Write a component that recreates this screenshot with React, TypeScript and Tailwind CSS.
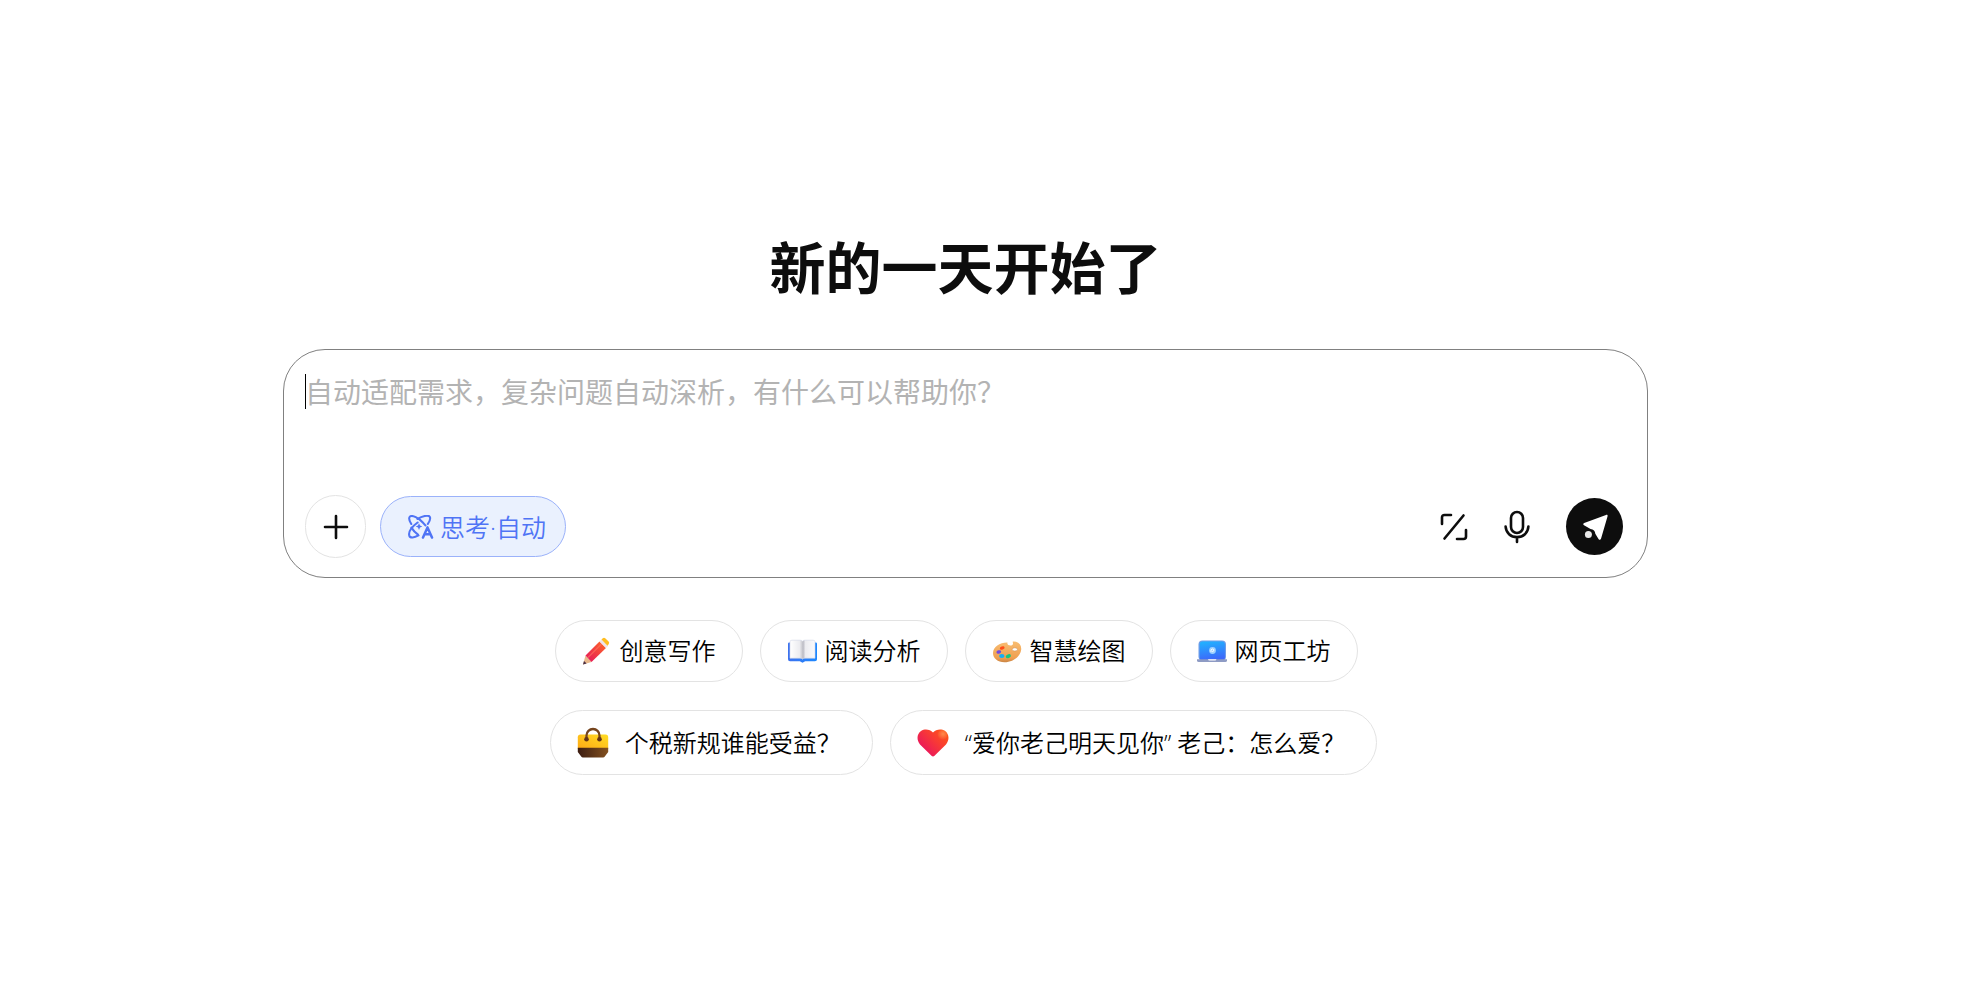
import type { ReactNode } from "react";

const sans =
  'font-["Open_Sans","Noto_Sans_CJK_SC",sans-serif]';

function PlusIcon() {
  return (
    <svg width="26" height="26" viewBox="0 0 26 26" fill="none" stroke="#0d0d0d" strokeWidth="2.6" strokeLinecap="round" aria-hidden="true">
      <path d="M13 2v22M2 13h22" />
    </svg>
  );
}

function ThinkIcon() {
  return (
    <svg width="26" height="24" viewBox="0 0 26 24" fill="none" stroke="#4f74f5" strokeWidth="2.1" strokeLinecap="round" strokeLinejoin="round" aria-hidden="true">
      <path d="M3.300 9C1.200 5.500 .6 2.600 2 1.500c2.500-1.800 8.600 1.600 12.800 5.900 1 1 1.900 2.100 2.600 3" />
      <path d="M9.500 4C14.200 1.100 20 -.2 21.600 1.600c1.200 1.500.3 4.300-1.800 7.400" />
      <path d="M9.600 7.500C4.500 11.300.3 16.700 1.300 20.600c.8 2.800 5 2.200 9.200-.2" />
      <path d="M3.400 12.600c1.700 2.700 4 5.100 6.600 7" />
      <path d="m11 8.300 1 2.300 2.300 1-2.300 1-1 2.300-1-2.300-2.300-1 2.300-1z" fill="#4f74f5" stroke="none" />
      <path d="m15 22.600 4.500-10.200L24 22.600M16.800 19.300h5.400" strokeWidth="2.500" />
    </svg>
  );
}

function ExpandIcon() {
  return (
    <svg width="28" height="28" viewBox="0 0 28 28" fill="none" stroke="#0d0d0d" strokeWidth="2.600" strokeLinecap="round" strokeLinejoin="round" aria-hidden="true">
      <path d="M2 11V4.500Q2 2 4.500 2H11M26 17v6.500q0 2.500-2.500 2.500H17M23.500 2.500 4.500 25.500" />
    </svg>
  );
}

function MicIcon() {
  return (
    <svg width="26" height="34" viewBox="0 0 26 34" fill="none" stroke="#0d0d0d" strokeWidth="2.600" strokeLinecap="round" aria-hidden="true">
      <rect x="7" y="2" width="12" height="21" rx="6" />
      <path d="M1.600 16.500c.4 6.400 5.100 10.600 11.400 10.600s11-4.200 11.400-10.600M13 27.500V32" />
    </svg>
  );
}

function SendIcon() {
  return (
    <svg width="57" height="57" viewBox="0 0 57 57" fill="#fff" aria-hidden="true">
      <path d="M41.500 18.500c.5-1.300-.3-2-1.500-1.600L18.200 25c-1.200.5-1.200 1.500-.2 2.200l6.500 3.800c3 .2 4.800 2.200 4.800 4.800l3.200 5.200c.8 1.200 2 1.100 2.500-.2z" />
      <circle cx="22.400" cy="36.500" r="3.500" fill="#e8e8e8" />
    </svg>
  );
}

function PencilIcon() {
  return (
    <svg width="30" height="30" viewBox="0 0 30 30" aria-hidden="true">
      <defs>
        <linearGradient id="pencil-body" x1="0" y1="1" x2="1" y2="0">
          <stop offset="0" stopColor="#e4145e" />
          <stop offset="1" stopColor="#ff6a25" />
        </linearGradient>
      </defs>
      <path d="M1 28.500 3.500 19.500 9.500 26z" fill="#e9b98c" />
      <path d="M1 28.500 2 25l2.600 2.500z" fill="#4a3045" />
      <path d="M3.500 19.500 17.500 5.500 24 12 9.500 26z" fill="url(#pencil-body)" />
      <path d="M6 21.500 19.500 8" stroke="#ff7560" strokeWidth="1.500" opacity=".6" />
      <path d="m17.500 5.500 2-2L26 10l-2 2z" fill="#efe3ea" />
      <path d="m19.500 3.500 1.300-1.300q1.200-1.100 2.400 0l3.400 3.300q1.200 1.200 0 2.700L25.500 9.700z" fill="#ffbd20" />
    </svg>
  );
}

function BookIcon() {
  return (
    <svg width="30" height="30" viewBox="0 0 30 30" aria-hidden="true">
      <defs>
        <linearGradient id="book-page" x1="0" x2="1">
          <stop offset="0" stopColor="#fff" />
          <stop offset=".38" stopColor="#ececf0" />
          <stop offset=".49" stopColor="#c9c9cf" />
          <stop offset=".52" stopColor="#b9b9c2" />
          <stop offset=".62" stopColor="#ececf0" />
          <stop offset="1" stopColor="#fafafc" />
        </linearGradient>
        <linearGradient id="book-cover" x1="0" x2="1">
          <stop offset="0" stopColor="#3d72ef" />
          <stop offset="1" stopColor="#1c88ff" />
        </linearGradient>
      </defs>
      <path d="M2.200 6.500h26.600q1.200 0 1.200 1.300v15.500q0 2-2 2h-9.800l-2.700 1.400-2.700-1.400H3q-2 0-2-2V7.800q0-1.300 1.200-1.300z" fill="url(#book-cover)" />
      <path d="M3 5.800q0-1.600 2-1.600h8q1.700 0 2.500 1 .8-1 2.500-1h8q2 0 2 1.600v16.400H18q-1.700 0-2.500 1-.8-1-2.500-1H3z" fill="url(#book-page)" stroke="#d0d5e6" strokeWidth=".6" />
    </svg>
  );
}

function PaletteIcon() {
  return (
    <svg width="30" height="30" viewBox="0 0 30 30" aria-hidden="true">
      <defs>
        <linearGradient id="palette-wood" x1="0" y1="0" x2="0" y2="1">
          <stop offset="0" stopColor="#f8bd71" />
          <stop offset=".8" stopColor="#ef9f51" />
          <stop offset="1" stopColor="#c98443" />
        </linearGradient>
      </defs>
      <path d="M15.500 6.500c-1.200 3 4.500 4.200 5.400 1.700.6-1.800-1.300-2.600.8-2.700 4.800.1 7.800 3.300 7.500 8-.6 7-8.200 12.800-16.700 12.800C5.600 26.200 1 22.300 1 17c.2-6.400 7-10.700 14.500-10.500z" fill="url(#palette-wood)" />
      <ellipse cx="22.800" cy="13.400" rx="2.600" ry="1.600" fill="#fff" stroke="#c98b50" strokeWidth=".5" />
      <ellipse cx="10.200" cy="12" rx="2.500" ry="1.600" transform="rotate(-20 10.200 12)" fill="#ff4c16" />
      <ellipse cx="6.800" cy="16" rx="2.400" ry="1.700" transform="rotate(-10 6.800 16)" fill="#704be0" />
      <ellipse cx="9.800" cy="20" rx="2.700" ry="1.900" fill="#16aef5" />
      <ellipse cx="16.300" cy="20.200" rx="2.700" ry="1.900" transform="rotate(-20 16.300 20.200)" fill="#19c77d" />
    </svg>
  );
}

function LaptopIcon() {
  return (
    <svg width="30" height="30" viewBox="0 0 30 30" aria-hidden="true">
      <defs>
        <linearGradient id="laptop-screen" x1="0" y1="0" x2=".2" y2="1">
          <stop offset="0" stopColor="#20b5ff" />
          <stop offset="1" stopColor="#3d68fa" />
        </linearGradient>
      </defs>
      <rect x="1.500" y="4.500" width="27.500" height="20" rx="4" fill="#6f9ce8" />
      <rect x="2.700" y="5.500" width="25.200" height="19" rx="3" fill="url(#laptop-screen)" />
      <circle cx="15.500" cy="14.500" r="3.400" fill="#9ed1ff" />
      <path d="M14 16q-.8-2.800 1.500-3 2 .2 1.200 2-1 1.300-1.800 0" fill="none" stroke="#fff" strokeWidth=".9" />
      <path d="M0 23.300h30v1.200q0 1.500-1.700 1.500H1.700Q0 26 0 24.500z" fill="#8e9bc4" />
      <path d="M11 23.300h8.500q-.4 1.200-1.500 1.200h-5.500q-1.200 0-1.500-1.200z" fill="#fff" />
    </svg>
  );
}

function BagIcon() {
  return (
    <svg width="32" height="32" viewBox="0 0 32 32" aria-hidden="true">
      <defs>
        <linearGradient id="bag-top" x1="0" y1="1" x2="1" y2="0">
          <stop offset="0" stopColor="#ffa914" />
          <stop offset="1" stopColor="#ffdd25" />
        </linearGradient>
        <linearGradient id="bag-base" x1="0" x2="1">
          <stop offset="0" stopColor="#3c1d12" />
          <stop offset="1" stopColor="#83511f" />
        </linearGradient>
      </defs>
      <path d="M3.500 7.500h25q2.700 0 2.700 2.700V22H.8V10.200Q.8 7.500 3.500 7.500z" fill="url(#bag-top)" />
      <path d="M.8 20.700h30.400v4.300L27.800 29.500q-.6.900-1.800.9H6q-1.200 0-1.800-.9L.8 25z" fill="url(#bag-base)" />
      <path d="M9.500 12V8.500a6.500 6.500 0 0 1 13 0V12" fill="none" stroke="#75441d" strokeWidth="2.300" />
      <circle cx="9.500" cy="12.300" r="2.300" fill="#633417" />
      <circle cx="22.500" cy="12.300" r="2.300" fill="#633417" />
    </svg>
  );
}

function HeartIcon() {
  return (
    <svg width="32" height="32" viewBox="0 0 32 32" aria-hidden="true">
      <defs>
        <linearGradient id="heart-fill" x1="0" y1=".8" x2="1" y2="0">
          <stop offset=".1" stopColor="#e9155f" />
          <stop offset=".55" stopColor="#f83a35" />
          <stop offset="1" stopColor="#ff5a10" />
        </linearGradient>
        <radialGradient id="heart-shine" cx="26" cy="7" r="6" gradientUnits="userSpaceOnUse">
          <stop offset="0" stopColor="#ff8a4c" />
          <stop offset="1" stopColor="#ff8a4c" stopOpacity="0" />
        </radialGradient>
      </defs>
      <path d="M16 29.500q-.7 0-1.500-.8L3 17.500C-1 12.500.2 6.500 4 4c4.500-2.700 9.200-1.200 12 1.600C18.800 2.800 23.500 1.300 28 4c3.800 2.500 5 8.500 1 13.500L17.500 28.700q-.8.8-1.500.8z" fill="url(#heart-fill)" />
      <circle cx="25.500" cy="8" r="5" fill="url(#heart-shine)" />
    </svg>
  );
}

const shortcuts: { label: string; icon: ReactNode }[] = [
  { label: "创意写作", icon: <PencilIcon /> },
  { label: "阅读分析", icon: <BookIcon /> },
  { label: "智慧绘图", icon: <PaletteIcon /> },
  { label: "网页工坊", icon: <LaptopIcon /> },
];

const topics: { label: string; icon: ReactNode }[] = [
  { label: "个税新规谁能受益？", icon: <BagIcon /> },
  { label: "“爱你老己明天见你” 老己：怎么爱？", icon: <HeartIcon /> },
];

export default function App() {
  return (
    <main className={`min-h-screen bg-white pt-[225px] pr-[53px] text-[#0d0d0d] ${sans}`}>
      <div className="mx-auto flex w-full max-w-[1365px] flex-col items-center">
        <h1 className="text-[56px] leading-[84px] font-bold">新的一天开始了</h1>

        <form
          className="mt-10 flex w-full flex-col rounded-[42px] border border-[#808080] px-[21px] pt-6 pb-[19px]"
          onSubmit={(e) => e.preventDefault()}
        >
          <div className="relative">
            <textarea
              aria-label="输入问题"
              rows={2}
              placeholder="自动适配需求，复杂问题自动深析，有什么可以帮助你？"
              className="block h-[121px] w-full resize-none text-[28px] leading-9 caret-transparent outline-none placeholder:text-[#b3b3b3]"
            />
            <span className="absolute top-0 left-0 h-[35px] w-px bg-black" />
          </div>
          <div className="flex items-center">
            <button type="button" aria-label="添加" className="flex h-[63px] w-[61px] items-center justify-center rounded-full border border-[#e3e3e3]">
              <PlusIcon />
            </button>
            <button type="button" className="ml-3.5 flex h-[61px] items-center gap-1.5 rounded-full border border-[#9bb2fa] bg-[#eaf1fe] pr-[19px] pl-[27px] text-[25px] leading-9 font-[350] text-[#4f74f5]">
              <ThinkIcon />
              思考·自动
            </button>
            <button type="button" aria-label="展开输入框" className="ml-auto">
              <ExpandIcon />
            </button>
            <button type="button" aria-label="语音输入" className="ml-9">
              <MicIcon />
            </button>
            <button type="submit" aria-label="发送" className="mr-[3px] ml-9 rounded-full bg-[#0d0d0d]">
              <SendIcon />
            </button>
          </div>
        </form>

        <div className="mt-[42px] flex flex-wrap justify-center gap-[17px] pr-[19px]">
          {shortcuts.map((s) => (
            <button key={s.label} type="button" className="flex h-[62px] items-center gap-2 rounded-full border border-[#e3e3e3] px-[26px] text-[24px] leading-9 font-[350] whitespace-nowrap text-black">
              {s.icon}
              {s.label}
            </button>
          ))}
        </div>

        <div className="mt-7 flex flex-wrap justify-center gap-[17px] pr-1">
          {topics.map((t) => (
            <button key={t.label} type="button" className="flex h-[65px] items-center gap-4 rounded-full border border-[#e3e3e3] pr-[31px] pl-[26px] text-[24px] leading-9 font-[350] whitespace-nowrap text-black">
              {t.icon}
              {t.label}
            </button>
          ))}
        </div>
      </div>
    </main>
  );
}
